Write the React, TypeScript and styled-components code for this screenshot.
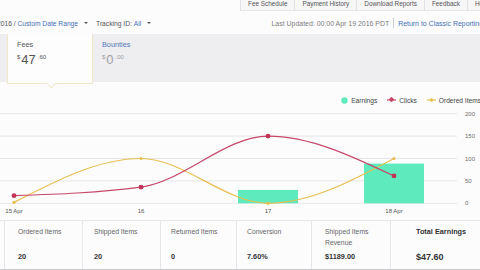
import React from 'react';
import styled, { createGlobalStyle } from 'styled-components';

// Global reset for the fixed 480x270 viewport
const GlobalStyle = createGlobalStyle`
  html, body {
    margin: 0;
    padding: 0;
    background: #fcfcfd;
    overflow: hidden;
  }
  body {
    font-family: 'Liberation Sans', Arial, sans-serif;
    color: #555;
  }
`;

const Page = styled.div`
  width: 480px;
  height: 270px;
  overflow: hidden;
  display: flex;
  flex-direction: column;
  background: #fcfcfd;
`;

// Top tab strip
const TabBar = styled.div`
  height: 11px;
  display: flex;
  padding-left: 240px;
  white-space: nowrap;
  flex-shrink: 0;
`;

const Tab = styled.div`
  flex-shrink: 0;
  padding: 0 7px 3px;
  font-size: 6.4px;
  line-height: 8px;
  color: #555;
  background: #f7f7f8;
  border-left: 1px solid #e2e2e4;
  border-bottom: 1px solid #e6e6e8;
  display: flex;
  align-items: center;
`;

// Filters + last updated row
const HeaderRow = styled.div`
  height: 22px;
  display: flex;
  align-items: center;
  padding-top: 1px;
  font-size: 6.7px;
  white-space: nowrap;
  flex-shrink: 0;
`;

const Filters = styled.div`
  display: flex;
  align-items: center;
  margin-left: -3px;
  flex-shrink: 0;
`;

const Muted = styled.span`
  color: ${(p) => (p.$light ? '#7d7d80' : '#555')};
`;

const LinkText = styled.span`
  color: #4670b3;
`;

const Caret = styled.span`
  display: inline-block;
  width: 0;
  height: 0;
  border-left: 2px solid transparent;
  border-right: 2px solid transparent;
  border-top: 2.5px solid #555;
  margin: 0 8px 0 6px;
`;

const Updated = styled.div`
  margin-left: auto;
  margin-right: -3px;
  display: flex;
  align-items: center;
  flex-shrink: 0;
  font-size: 6.95px;
`;

const Divider = styled.span`
  width: 1px;
  height: 10px;
  background: #d0d0d4;
  margin: 0 4px 0 4px;
`;

// Grey summary band with Fees / Bounties
const SummaryBand = styled.div`
  height: 48px;
  flex-shrink: 0;
  background: #eeeef0;
  display: flex;
  padding-left: 7px;
`;

const FeeCard = styled.div`
  position: relative;
  width: 86px;
  height: 50px;
  box-sizing: border-box;
  padding: 6px 0 0 9px;
  background: #fdfdfd;
  border: 1px solid #f1e7cb;
  border-top: none;
  z-index: 1;

  &::after {
    content: '';
    position: absolute;
    left: 40px;
    bottom: -4px;
    width: 6px;
    height: 6px;
    background: #fdfdfd;
    border-right: 1px solid #f1e7cb;
    border-bottom: 1px solid #f1e7cb;
    transform: rotate(45deg);
  }
`;

const Bounty = styled.div`
  padding: 6px 0 0 9px;
`;

const CardTitle = styled.div`
  font-size: 7.3px;
  line-height: 10px;
  color: ${(p) => (p.$link ? '#5377b5' : '#555')};
`;

const Amount = styled.div`
  margin-top: 3px;
  display: flex;
  align-items: flex-start;
  color: ${(p) => (p.$dim ? '#a0a0a4' : '#555')};
`;

const AmountSup = styled.span`
  font-size: 6px;
  line-height: 8px;
  margin: ${(p) => (p.$gap ? '0 0 0 2px' : '0 1px 0 0')};
`;

const AmountMain = styled.span`
  font-size: 13px;
  line-height: 14px;
`;

// Chart section
const ChartSection = styled.div`
  flex: 1;
  display: flex;
  flex-direction: column;
`;

const Legend = styled.div`
  display: flex;
  justify-content: flex-end;
  align-items: center;
  gap: 10px;
  height: 10px;
  padding-top: 13px;
  margin-right: -1px;
  font-size: 6.6px;
  color: #444;
  white-space: nowrap;
`;

const LegendItem = styled.div`
  display: flex;
  align-items: center;
  gap: 3px;
  flex-shrink: 0;
`;

const ChartSvg = styled.svg`
  display: block;
  width: 480px;
  height: 115px;
`;

// Stats strip at the bottom
const StatsRow = styled.div`
  display: grid;
  grid-template-columns: 3px 80px 78px 76px 75px 79px 1fr;
  height: 50px;
  flex-shrink: 0;
  border-top: 1px solid #e6e6e8;
  border-bottom: 1px solid #c9c9cc;
  box-sizing: border-box;
`;

const StatCell = styled.div`
  display: flex;
  flex-direction: column;
  padding: 6px 4px 6px ${(p) => p.$inset}px;
  border-right: 1px solid #e6e6e8;
  box-sizing: border-box;

  &:last-child {
    border-right: none;
  }
`;

const StatLabel = styled.div`
  font-size: ${(p) => (p.$strong ? 7.3 : 6.8)}px;
  line-height: 10.5px;
  color: ${(p) => (p.$strong ? '#333' : '#666')};
  font-weight: ${(p) => (p.$strong ? 700 : 400)};
`;

const StatValue = styled.div`
  margin-top: auto;
  font-size: ${(p) => (p.$strong ? 9 : 7.3)}px;
  line-height: 12px;
  font-weight: 700;
  color: #333;
`;

const GREEN = '#5eeabd';
const RED = '#c5486a';
const YELLOW = '#e6bf50';

const xs = [14, 141, 268, 394];
const xLabels = ['15 Apr', '16', '17', '18 Apr'];
const clicks = [17, 36, 150, 61];
const ordered = [2, 100, 0, 100];
const earnings = [0, 0, 12.0, 35.6];

const BASE = 202.3;
const toY = (v) => BASE - v * 0.448;

// d3-style monotone cubic interpolation
const monotonePath = (pts) => {
  const n = pts.length;
  const sec = [];
  for (let i = 0; i < n - 1; i++) {
    sec.push((pts[i + 1][1] - pts[i][1]) / (pts[i + 1][0] - pts[i][0]));
  }
  const m = new Array(n).fill(0);
  for (let i = 1; i < n - 1; i++) {
    const h0 = pts[i][0] - pts[i - 1][0];
    const h1 = pts[i + 1][0] - pts[i][0];
    const s0 = sec[i - 1];
    const s1 = sec[i];
    const p = (s0 * h1 + s1 * h0) / (h0 + h1);
    m[i] = (Math.sign(s0) + Math.sign(s1)) * Math.min(Math.abs(s0), Math.abs(s1), 0.5 * Math.abs(p)) || 0;
  }
  m[0] = (3 * sec[0] - m[1]) / 2;
  m[n - 1] = (3 * sec[n - 2] - m[n - 2]) / 2;
  let d = `M${pts[0][0]},${pts[0][1]}`;
  for (let i = 0; i < n - 1; i++) {
    const dx = (pts[i + 1][0] - pts[i][0]) / 3;
    d += ` C${pts[i][0] + dx},${pts[i][1] + dx * m[i]} ${pts[i + 1][0] - dx},${pts[i + 1][1] - dx * m[i + 1]} ${pts[i + 1][0]},${pts[i + 1][1]}`;
  }
  return d;
};

const Chart = () => {
  const clickPts = xs.map((x, i) => [x, toY(clicks[i])]);
  const orderPts = xs.map((x, i) => [x, toY(ordered[i])]);
  return (
    <ChartSvg viewBox="0 104 480 115">
      {[0, 50, 100, 150, 200].map((v) => (
        <g key={v}>
          <line x1="0" x2="457" y1={toY(v)} y2={toY(v)} stroke="#e6e6e8" strokeWidth="1" />
          <text x="465" y={toY(v) + 2} fontSize="6" fill="#706a6c" fontFamily="Liberation Sans, Arial, sans-serif">
            {v}
          </text>
        </g>
      ))}
      {earnings.map((e, i) =>
        e > 0 ? (
          <rect key={i} x={xs[i] - 30} width="60" y={BASE - e * 1.115} height={e * 1.115} fill={GREEN} />
        ) : null
      )}
      <path d={monotonePath(orderPts)} fill="none" stroke={YELLOW} strokeWidth="1.2" />
      <path d={monotonePath(clickPts)} fill="none" stroke={RED} strokeWidth="1.2" />
      {orderPts.map(([x, y], i) => (
        <circle key={`o${i}`} cx={x} cy={y} r="1.6" fill={YELLOW} />
      ))}
      {clickPts.map(([x, y], i) => (
        <circle key={`c${i}`} cx={x} cy={y} r="2.4" fill="#c23456" />
      ))}
      {xs.map((x, i) => (
        <text key={`x${i}`} x={x} y="211.5" fontSize="6" fill="#555" textAnchor="middle" fontFamily="Liberation Sans, Arial, sans-serif">
          {xLabels[i]}
        </text>
      ))}
    </ChartSvg>
  );
};

const LineMarker = ({ color, diamond }) => (
  <svg width="9" height="6" viewBox="0 0 9 6">
    <line x1="0" x2="9" y1="3" y2="3" stroke={color} strokeWidth="1.2" />
    {diamond ? (
      <rect x="2.5" y="0.5" width="4" height="4" fill={color} transform="rotate(45 4.5 2.5)" />
    ) : (
      <circle cx="4.5" cy="3" r="1.8" fill={color} />
    )}
  </svg>
);

const Money = ({ whole, cents, dim }) => (
  <Amount $dim={dim}>
    <AmountSup>$</AmountSup>
    <AmountMain>{whole}</AmountMain>
    <AmountSup $gap>.{cents}</AmountSup>
  </Amount>
);

const stats = [
  { label: '', value: '', inset: 0 },
  { label: 'Ordered Items', value: '20', inset: 15 },
  { label: 'Shipped Items', value: '20', inset: 11 },
  { label: 'Returned Items', value: '0', inset: 10 },
  { label: 'Conversion', value: '7.60%', inset: 10 },
  { label: 'Shipped Items Revenue', value: '$1189.00', inset: 13 },
  { label: 'Total Earnings', value: '$47.60', inset: 25, strong: true },
];

const App = () => (
  <Page>
    <GlobalStyle />
    <TabBar>
      <Tab>Fee Schedule</Tab>
      <Tab>Payment History</Tab>
      <Tab>Download Reports</Tab>
      <Tab>Feedback</Tab>
      <Tab>Help</Tab>
    </TabBar>

    <HeaderRow>
      <Filters>
        <Muted>2016 / </Muted>
        &nbsp;<LinkText>Custom Date Range</LinkText>
        <Caret />
        <Muted>Tracking ID:</Muted>
        &nbsp;<LinkText>All</LinkText>
        <Caret />
      </Filters>
      <Updated>
        <Muted $light>Last Updated: 00:00 Apr 19 2016 PDT</Muted>
        <Divider />
        <LinkText>Return to Classic Reporting</LinkText>
      </Updated>
    </HeaderRow>

    <SummaryBand>
      <FeeCard>
        <CardTitle>Fees</CardTitle>
        <Money whole="47" cents="60" />
      </FeeCard>
      <Bounty>
        <CardTitle $link>Bounties</CardTitle>
        <Money whole="0" cents="00" dim />
      </Bounty>
    </SummaryBand>

    <ChartSection>
      <Legend>
        <LegendItem>
          <svg width="7" height="7" viewBox="0 0 7 7">
            <circle cx="3.5" cy="3.5" r="3.2" fill={GREEN} />
          </svg>
          Earnings
        </LegendItem>
        <LegendItem>
          <LineMarker color={RED} diamond />
          Clicks
        </LegendItem>
        <LegendItem>
          <LineMarker color={YELLOW} />
          Ordered Items
        </LegendItem>
      </Legend>
      <Chart />
    </ChartSection>

    <StatsRow>
      {stats.map((s, i) => (
        <StatCell key={i} $inset={s.inset}>
          <StatLabel $strong={s.strong}>{s.label}</StatLabel>
          <StatValue $strong={s.strong}>{s.value}</StatValue>
        </StatCell>
      ))}
    </StatsRow>
  </Page>
);

export default App;
